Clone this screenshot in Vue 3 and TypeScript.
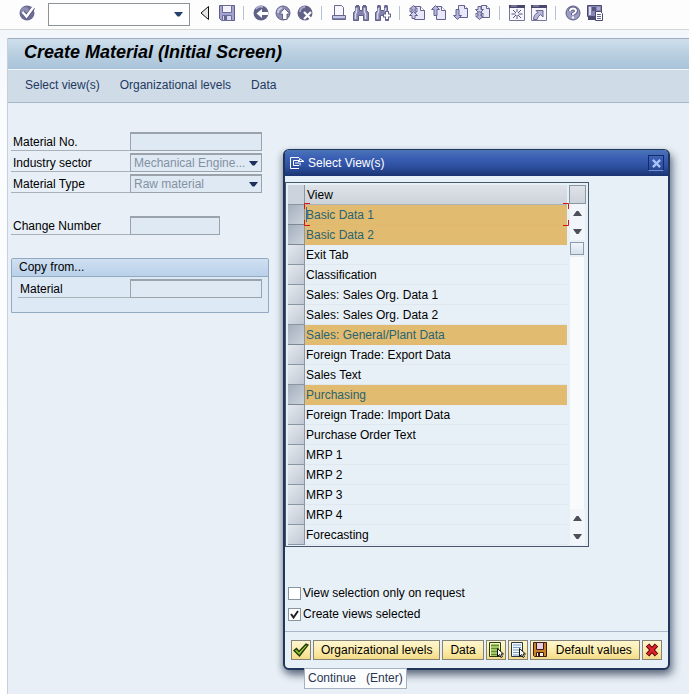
<script setup lang="ts">
import { ref } from 'vue'

interface ViewRow {
  name: string
  selected: boolean
}

const command = ref('')
const materialNo = ref('')
const sector = ref('Mechanical Engine...')
const materialType = ref('Raw material')
const changeNumber = ref('')
const copyMaterial = ref('')
const onlyOnRequest = ref(false)
const createSelected = ref(true)

const menu: string[] = ['Select view(s)', 'Organizational levels', 'Data']

const picked = ['Basic Data 1', 'Basic Data 2', 'Sales: General/Plant Data', 'Purchasing']

const views = ref<ViewRow[]>(
  [
    'Basic Data 1',
    'Basic Data 2',
    'Exit Tab',
    'Classification',
    'Sales: Sales Org. Data 1',
    'Sales: Sales Org. Data 2',
    'Sales: General/Plant Data',
    'Foreign Trade: Export Data',
    'Sales Text',
    'Purchasing',
    'Foreign Trade: Import Data',
    'Purchase Order Text',
    'MRP 1',
    'MRP 2',
    'MRP 3',
    'MRP 4',
    'Forecasting',
  ].map((name) => ({ name, selected: picked.includes(name) })),
)

function toggle(row: ViewRow): void {
  row.selected = !row.selected
}
</script>

<template>
  <div class="page">
    <header class="toolbar">
      <button class="tool" aria-label="Enter">
        <svg viewBox="0 0 16 16">
          <circle cx="8" cy="8" r="7.5" fill="#6b6b93" />
          <circle cx="6" cy="6" r="4" fill="#8d8db3" />
          <path d="M4 7l3.5 4.500L14.500 2.500" fill="none" stroke="#5a5a86" stroke-width="4" />
          <path d="M3.500 7l4 4.500L14.500 2" fill="none" stroke="#fff" stroke-width="2.400" />
        </svg>
      </button>
      <div class="command">
        <input v-model="command" aria-label="Command field" />
        <button class="drop" aria-label="Command history">
          <svg viewBox="0 0 9 5"><path d="M0 0h9L5.500 4.500h-2z" fill="#24406e" /></svg>
        </button>
      </div>
      <button class="tool narrow" aria-label="Hide command field">
        <svg viewBox="0 0 11 16"><path d="M9.500 1.500v13L2 8z" fill="#e6e6e6" stroke="#111" /></svg>
      </button>
      <button class="tool" aria-label="Save">
        <svg viewBox="0 0 16 16">
          <path d="M.5.5h15v15h-13l-2-2z" fill="#a3a3d0" stroke="#5f5f8d" />
          <path d="M3.500.5h9v7h-9z" fill="#f3f2fb" stroke="#6c6c98" />
          <path d="M3.500 15.500v-5h9v5z" fill="#d9d8f0" stroke="#6c6c98" />
          <path d="M5 11h3v4H5z" fill="#66668f" />
        </svg>
      </button>
      <span class="sep"></span>
      <button class="tool" aria-label="Back">
        <svg viewBox="0 0 16 16">
          <circle cx="8" cy="8" r="7.500" fill="#626288" />
          <path d="M3 4a6 6 0 0 1 7-2" fill="none" stroke="#aaaad0" stroke-width="2" />
          <path d="M3.500 8.500L9 4v3h6v3H9v3z" fill="#fff" />
        </svg>
      </button>
      <button class="tool" aria-label="Exit">
        <svg viewBox="0 0 16 16">
          <circle cx="8" cy="8" r="7" fill="#8c8cb4" stroke="#63638a" />
          <path d="M3 8a5 5 0 0 1 4-5" fill="none" stroke="#c9c9e6" stroke-width="2" />
          <path d="M9.500 3.500L15 9h-3v5.500H7.500V9h-3z" fill="#fff" stroke="#63638a" />
        </svg>
      </button>
      <button class="tool" aria-label="Cancel">
        <svg viewBox="0 0 16 16">
          <circle cx="8" cy="8" r="7.500" fill="#626288" />
          <path d="M3 7a5 5 0 0 1 5-5" fill="none" stroke="#aaaad0" stroke-width="2" />
          <path d="M7 7l7 7M14 7l-7 7" stroke="#fff" stroke-width="2.200" />
        </svg>
      </button>
      <span class="sep"></span>
      <button class="tool" aria-label="Print">
        <svg viewBox="0 0 16 16">
          <path d="M3.500 10V.5h7l2 2V10" fill="#f7f7fd" stroke="#66668f" />
          <path d="M1.500 10.500h13v4h-13z" fill="#c6c6e6" stroke="#66668f" />
          <path d="M2 13.500h12" stroke="#8585b0" />
        </svg>
      </button>
      <button class="tool" aria-label="Find">
        <svg viewBox="0 0 16 16">
          <path d="M2.500 1.500h4v4h3v-4h4v4l2 2v8h-5v-5h-5v5h-5v-8l2-2z" fill="#8383ac" stroke="#5f5f8a" />
          <path d="M3 1h3M10 1h3" stroke="#62628e" stroke-width="2" />
          <path d="M3.500 3v4l-1 2v5M11.500 3v4l1 2v5" fill="none" stroke="#d6d6ee" stroke-width="1.600" />
        </svg>
      </button>
      <button class="tool" aria-label="Find next">
        <svg viewBox="0 0 16 16">
          <path d="M2.500 1.500h3v4h4v-4h3v4l1 2v8h-3v-5h-5v5h-5v-8l2-2z" fill="#8383ac" stroke="#5f5f8a" />
          <path d="M2.500 1h3M9.500 1h3" stroke="#62628e" stroke-width="2" />
          <path d="M3.500 3v4l-1 2v5M10.500 3v4" fill="none" stroke="#d6d6ee" stroke-width="1.600" />
          <path d="M12 6v9M8 10.500h8" stroke="#62628e" stroke-width="4" />
          <path d="M12 7v7M9 10.500h6" stroke="#fff" stroke-width="2" />
        </svg>
      </button>
      <span class="sep"></span>
      <button class="tool" aria-label="First page">
        <svg viewBox="0 0 16 16">
          <path d="M5.500 1.500h6l4 4v9h-10z" fill="#e9e8fa" stroke="#62628e" />
          <path d="M11.500 1.500v4h4" fill="#fff" stroke="#62628e" />
          <path d="M4.500.5L8.500 4H6v2h2.500l-4 3.500L.5 6H3V4H.5z" fill="#b5b4da" stroke="#62628e" />
          <path d="M4.500 6.500l4 4H6v3H3v-3H.5z" fill="#d3d2ee" stroke="#62628e" />
        </svg>
      </button>
      <button class="tool" aria-label="Previous page">
        <svg viewBox="0 0 16 16">
          <path d="M5.500 1.500h5l4 4v9h-9z" fill="#e9e8fa" stroke="#62628e" />
          <path d="M10.500 1.500v4h4" fill="#fff" stroke="#62628e" />
          <path d="M4.500.5l4 4H6v6H3v-6H.5z" fill="#b5b4da" stroke="#62628e" />
        </svg>
      </button>
      <button class="tool" aria-label="Next page">
        <svg viewBox="0 0 16 16">
          <path d="M5.500.5h6l3 3v9h-9z" fill="#e9e8fa" stroke="#62628e" />
          <path d="M11.500.5v3h3" fill="#fff" stroke="#62628e" />
          <path d="M4.500 14.500l-4-4H3v-6h3v6h2.500z" fill="#b5b4da" stroke="#62628e" />
        </svg>
      </button>
      <button class="tool" aria-label="Last page">
        <svg viewBox="0 0 16 16">
          <path d="M6.500.5h5l3 3v9h-8z" fill="#e9e8fa" stroke="#62628e" />
          <path d="M11.500.5v3h3" fill="#fff" stroke="#62628e" />
          <path d="M4.500 8.500l-4-4H3v-3h3v3h2.500z" fill="#d3d2ee" stroke="#62628e" />
          <path d="M4.500 14.500l-4-3.500H3V9H.5l4-2.500 4 2.500H6v2h2.500z" fill="#b5b4da" stroke="#62628e" />
        </svg>
      </button>
      <span class="sep"></span>
      <button class="tool" aria-label="New session">
        <svg viewBox="0 0 16 16">
          <path d="M.5.5h15v15H.5z" fill="#f5f5fb" stroke="#77779b" />
          <path d="M0 0h16v3H0z" fill="#48486c" />
          <path d="M2 1h6" stroke="#9c9cc8" />
          <path d="M8 4v3M8 10v4M2.500 9h4M9.500 9h4M4 5l3 3M12 5L9 8M4 13l3-3M12 13l-3-3" stroke="#55557e" />
        </svg>
      </button>
      <button class="tool" aria-label="Create shortcut">
        <svg viewBox="0 0 16 16">
          <path d="M.5.5h15v15H.5z" fill="#f5f5fb" stroke="#77779b" />
          <path d="M0 0h16v3H0z" fill="#48486c" />
          <path d="M2 1h6" stroke="#9c9cc8" />
          <path d="M5 5.500h7v6.500L9.500 9.500q-3 2-3.500 5H2.500q0-5 4.500-7z" fill="#b9b8dc" stroke="#66668f" />
        </svg>
      </button>
      <span class="sep"></span>
      <button class="tool" aria-label="Help">
        <svg viewBox="0 0 16 16">
          <circle cx="8" cy="8" r="7" fill="#9d9dc4" stroke="#5f5f88" />
          <path d="M5 6q0-2.500 3-2.500t3 2.500q0 1.500-3 3v1" fill="none" stroke="#4f4f7a" stroke-width="3.600" />
          <path d="M5 6q0-2.500 3-2.500t3 2.500q0 1.500-3 3v1" fill="none" stroke="#fff" stroke-width="2" />
          <path d="M7 11.500h2v2H7z" fill="#fff" />
        </svg>
      </button>
      <button class="tool" aria-label="Customize layout">
        <svg viewBox="0 0 16 16">
          <path d="M.5.5h14v11H.5z" fill="#8685b6" stroke="#4a4a70" />
          <path d="M2 2h2v8H2z" fill="#dcdcf0" />
          <path d="M5 2h4v4H5z" fill="#55557e" />
          <path d="M10 2h3v3h-3z" fill="#a8a8d0" />
          <path d="M1 13.500h7" stroke="#4a4a70" stroke-width="3" />
          <path d="M8.500 6.500h5l2 2v7h-7z" fill="#fff" stroke="#4a4a70" />
          <path d="M10 9.500h4M10 11.500h4M10 13.500h4" stroke="#66668f" />
        </svg>
      </button>
    </header>

    <main class="screen">
      <h1>Create Material (Initial Screen)</h1>
      <nav class="menu">
        <a v-for="item in menu" :key="item" href="#">{{ item }}</a>
      </nav>

      <form class="form" @submit.prevent>
        <div class="field">
          <label for="matno">Material No.</label>
          <input id="matno" v-model="materialNo" />
        </div>
        <div class="field">
          <label for="sector">Industry sector</label>
          <div class="combo">
            <select id="sector" v-model="sector" disabled>
              <option>Mechanical Engine...</option>
            </select>
            <svg viewBox="0 0 9 5"><path d="M0 0h9L5.500 4.500h-2z" fill="#1d2f5a" /></svg>
          </div>
        </div>
        <div class="field">
          <label for="mattype">Material Type</label>
          <div class="combo">
            <select id="mattype" v-model="materialType" disabled>
              <option>Raw material</option>
            </select>
            <svg viewBox="0 0 9 5"><path d="M0 0h9L5.500 4.500h-2z" fill="#1d2f5a" /></svg>
          </div>
        </div>
        <div class="field apart">
          <label for="change">Change Number</label>
          <input id="change" v-model="changeNumber" class="short" />
        </div>
        <section class="group">
          <h2>Copy from...</h2>
          <div class="field">
            <label for="copymat">Material</label>
            <input id="copymat" v-model="copyMaterial" />
          </div>
        </section>
      </form>
    </main>

    <section class="dialog" role="dialog" aria-labelledby="dlg-title">
      <header class="titlebar">
        <svg class="exit" viewBox="0 0 16 12">
          <path d="M10 .5H1.500v11H10M4.500 3.500h6v-2l4.500 3h-6M4.500 3.500v5H9M6 6h4M10 8.500h-1M11 5.500v3" fill="none" stroke="#fff" />
        </svg>
        <h2 id="dlg-title">Select View(s)</h2>
        <button class="close" aria-label="Close">
          <svg viewBox="0 0 10 10"><path d="M1 1l8 8M9 1L1 9" stroke="#a9c4fb" stroke-width="2.600" /></svg>
        </button>
      </header>

      <div class="grid">
        <table>
          <thead>
            <tr>
              <th class="mark"></th>
              <th>View</th>
            </tr>
          </thead>
          <tbody>
            <tr v-for="row in views" :key="row.name" :class="{ on: row.selected }">
              <td class="mark"><button :aria-label="row.name" @click="toggle(row)"></button></td>
              <td>{{ row.name }}</td>
            </tr>
          </tbody>
        </table>
        <div class="scroll">
          <button class="config" aria-label="Configure columns"></button>
          <button class="arrow" aria-label="Scroll up"><svg viewBox="0 0 9 5"><path d="M0 5h9L5.500 0h-2z" /></svg></button>
          <button class="arrow" aria-label="Scroll down"><svg viewBox="0 0 9 5"><path d="M0 0h9L5.500 5h-2z" /></svg></button>
          <span class="thumb"></span>
          <span class="track"></span>
          <button class="arrow" aria-label="Page up"><svg viewBox="0 0 9 5"><path d="M0 5h9L5.500 0h-2z" /></svg></button>
          <button class="arrow" aria-label="Page down"><svg viewBox="0 0 9 5"><path d="M0 0h9L5.500 5h-2z" /></svg></button>
        </div>
        <svg class="cursor" viewBox="0 0 265 23">
          <path d="M6 .5H.5V6M.5 17v5.500H6M259 .5h5.500V6M264.500 17v5.500H259" fill="none" stroke="#d21414" />
          <path d="M2.500 4v15" stroke="#2f6fa8" />
        </svg>
      </div>

      <div class="options">
        <label>
          <input v-model="onlyOnRequest" type="checkbox" />
          <span>View selection only on request</span>
        </label>
        <label>
          <input v-model="createSelected" type="checkbox" />
          <span>Create views selected</span>
          <svg v-if="createSelected" class="check" viewBox="0 0 9 9">
            <path d="M1 4l2.500 3.500L8 1" fill="none" stroke="#222" stroke-width="2" />
          </svg>
        </label>
      </div>

      <footer class="actions">
        <button class="icon" aria-label="Continue">
          <svg viewBox="0 0 16 16">
            <path d="M1 8.500l2.500-2 2.500 3L13 2l2 1L6.500 14z" fill="#6da324" stroke="#1d3a08" stroke-width="1.300" />
            <path d="M3 8.500l3 3L13 4" fill="none" stroke="#a9d24c" />
          </svg>
        </button>
        <button>Organizational levels</button>
        <button>Data</button>
        <button class="icon" aria-label="Select all">
          <svg viewBox="0 0 16 16">
            <path d="M1.500.5h11v14h-11z" fill="#eef6c4" stroke="#2c3a12" />
            <path d="M3 3.500h8M3 6.500h8M3 9.500h8M3 12.500h8" stroke="#5f8f1c" stroke-width="2" />
            <path d="M9.500 6.500v8l2-2 1.500 3 1.500-1-1.500-2.500h2.500z" fill="#fff" stroke="#111" />
          </svg>
        </button>
        <button class="icon" aria-label="Deselect all">
          <svg viewBox="0 0 16 16">
            <path d="M1.500.5h11v14h-11z" fill="#f2f7fb" stroke="#2b3642" />
            <path d="M3 3h8M3 5.500h8M3 8h8M3 10.500h8M3 13h8" stroke="#7ba0bf" />
            <path d="M9.500 6.500v8l2-2 1.500 3 1.500-1-1.500-2.500h2.500z" fill="#fff" stroke="#111" />
          </svg>
        </button>
        <button class="defaults">
          <svg viewBox="0 0 16 16">
            <path d="M1.500.5h13v14h-12l-1-1z" fill="#c9822a" stroke="#3b1c14" />
            <path d="M4.500.5h7v7h-7z" fill="#e9cde2" stroke="#3b1c14" />
            <path d="M4.500 14.500v-4h7v4z" fill="#fbf3ea" stroke="#3b1c14" />
            <path d="M6 11h2v3H6z" fill="#3b1c14" />
          </svg>
          <span>Default values</span>
        </button>
        <button class="icon" aria-label="Cancel dialog">
          <svg viewBox="0 0 16 16">
            <path d="M3.500 3l9 10M12.500 3l-9 10" stroke="#4a0808" stroke-width="4.600" />
            <path d="M3.800 3.400l8.400 9.200M12.200 3.400l-8.400 9.200" stroke="#e0202a" stroke-width="2.800" />
          </svg>
        </button>
      </footer>
      <div class="tip" role="tooltip">Continue&nbsp;&nbsp; (Enter)</div>
    </section>
  </div>
</template>

<style>
body {
  margin: 0;
}
</style>

<style scoped>
.page,
.page * {
  box-sizing: border-box;
}

.page {
  position: relative;
  display: flex;
  flex-direction: column;
  min-height: 100vh;
  overflow: hidden;
  background: linear-gradient(#f0f5fb, #fbfcfe 120px, #fff);
  color: #000;
  font: 12px/16px 'Liberation Sans', Arial, sans-serif;
}

button,
input,
select {
  margin: 0;
  padding: 0;
  border: 0;
  border-radius: 0;
  background: none;
  color: inherit;
  font: inherit;
}

svg {
  display: block;
}

.toolbar {
  display: flex;
  align-items: center;
  gap: 6px;
  height: 30px;
  padding: 0 0 4px 19px;
  border-bottom: 1px solid #d3d8d2;
  background: #fdfdfe;
}

.tool {
  flex: none;
  width: 16px;
  height: 16px;
}

.narrow {
  width: 11px;
  margin-right: 3px;
}

.tool svg {
  width: 100%;
  height: 16px;
}

.sep {
  flex: none;
  width: 2px;
  height: 14px;
  margin: 0 2px;
  border-left: 1px solid #b4c3d6;
}

.command {
  display: flex;
  align-items: center;
  flex: none;
  width: 142px;
  height: 23px;
  margin: 3px 3px 0 7px;
  border: 1px solid #8d9297;
  background: #fff;
}

.command input {
  flex: 1;
  min-width: 0;
  height: 20px;
  padding: 0 4px;
}

.drop {
  width: 20px;
  height: 20px;
  padding-left: 5px;
}

.drop svg {
  width: 9px;
  height: 5px;
}

.screen {
  flex: 1;
  margin: 8px 0 0 7px;
  border-left: 1px solid #c4d0dc;
  background: #e8eff6;
}

h1 {
  margin: 0;
  padding: 0 16px 4px;
  border-top: 1px solid #a0abc0;
  background: linear-gradient(#cfdfec, #b9cfe0 50%, #a9c3da);
  font: italic bold 18px/26px 'Liberation Sans', Arial, sans-serif;
}

.menu {
  display: flex;
  gap: 20px;
  padding: 7px 17px 9px;
  border-top: 1px solid #eef4fa;
  border-bottom: 1px solid #a5b7c8;
  background: #cfdce7;
}

.menu a {
  color: #243862;
  text-decoration: none;
}

.form {
  display: flex;
  flex-direction: column;
  gap: 2px;
  width: 261px;
  padding: 29px 0 0 3px;
}

.field {
  display: flex;
  align-items: flex-end;
}

.field label {
  width: 119px;
  height: 17px;
  padding-left: 2px;
  border-bottom: 1px solid #a9b1b9;
}

.field input,
.combo {
  width: 132px;
  height: 19px;
  border: 1px solid #9aa3ac;
  border-top-width: 2px;
  background: #dfe9f3;
}

.field .short {
  width: 90px;
}

.combo {
  position: relative;
}

.combo select {
  display: block;
  width: 100%;
  height: 15px;
  padding-left: 3px;
  appearance: none;
  color: #8391a2;
  opacity: 1;
}

.combo svg {
  position: absolute;
  top: 6px;
  right: 3px;
  width: 9px;
  height: 5px;
}

.apart {
  margin-top: 21px;
}

.group {
  width: 258px;
  margin-top: 21px;
  padding-bottom: 14px;
  border: 1px solid #92a9c0;
  border-radius: 2px 2px 0 0;
  background: #dde9f5;
}

.group h2 {
  margin: 0 0 2px;
  padding: 0 7px 1px;
  border-bottom: 1px solid #92a9c0;
  background: linear-gradient(#cfe0f1, #b9d1ea);
  font: 12px/16px 'Liberation Sans', Arial, sans-serif;
}

.group .field {
  padding-left: 6px;
}

.group .field label {
  width: 112px;
}

.dialog {
  position: absolute;
  top: 149px;
  left: 283px;
  width: 387px;
  border: 1px solid #20365a;
  border-width: 1px 2px 2px;
  border-radius: 6px;
  background: #e8f0f7;
  box-shadow: 3px 5px 8px rgba(40, 55, 80, 0.6), -2px 3px 6px rgba(40, 55, 80, 0.3);
}

.titlebar {
  display: flex;
  align-items: center;
  height: 26px;
  padding: 0 4px;
  border-radius: 4px 4px 0 0;
  background: linear-gradient(#4b74b8, #3a5fb4 30%, #2d4f9f 65%, #1a3472);
  color: #fff;
}

.exit {
  width: 16px;
  height: 12px;
}

.titlebar h2 {
  flex: 1;
  margin: 0 0 0 3px;
  font: 12px/16px 'Liberation Sans', Arial, sans-serif;
}

.close {
  display: flex;
  align-items: center;
  justify-content: center;
  width: 16px;
  height: 16px;
  border: 1px solid #142c66;
  border-bottom-color: #6f8fd0;
}

.close svg {
  width: 9px;
  height: 9px;
}

.grid {
  position: relative;
  display: flex;
  width: 304px;
  margin-top: 6px;
  padding: 2px 2px 1px;
  border: 1px solid #46566b;
}

table {
  flex: 1;
  border-spacing: 0;
}

th {
  height: 20px;
  padding: 0 0 0 2px;
  border-bottom: 1px solid #a9b1ba;
  background: linear-gradient(#dfe3e8, #cdd3da);
  font-weight: normal;
  text-align: left;
}

td {
  height: 20px;
  padding: 0 0 0 1px;
  border-bottom: 1px solid #e0e7ee;
  line-height: 16px;
}

.mark {
  width: 17px;
  padding: 0;
  border-right: 1px solid #8b96a3;
  border-bottom: 1px solid #8b96a3;
  background: #ccd3dc;
}

.mark button {
  display: block;
  width: 16px;
  height: 19px;
  background: linear-gradient(135deg, #e4e9ee, #bfc8d3);
}

.on td {
  border-bottom-color: #e1b86c;
  background: #e1bb6f;
  color: #2a6371;
}

.on .mark {
  border-bottom-color: #7d8895;
}

.on .mark button {
  background: linear-gradient(135deg, #a4afbd, #ccd3dc);
}

.scroll {
  display: flex;
  flex-direction: column;
  align-items: center;
  width: 19px;
  padding-left: 1px;
}

.config {
  width: 17px;
  height: 19px;
  border: 1px solid #8b96a3;
  background: linear-gradient(#dfe3e8, #cdd3da);
}

.arrow {
  display: flex;
  align-items: center;
  justify-content: center;
  width: 15px;
  height: 18px;
  background: #f2f6fa;
}

.arrow svg {
  width: 9px;
  height: 5px;
  fill: #4b5158;
}

.thumb {
  width: 14px;
  height: 13px;
  margin: 2px 0;
  border: 1px solid #8b9bac;
  background: linear-gradient(#f0f5fa, #d5e0ea);
}

.track {
  flex: 1;
  width: 14px;
  background: #f8fafc;
}

.cursor {
  position: absolute;
  top: 20px;
  left: 18px;
  width: 265px;
  height: 23px;
  pointer-events: none;
}

.options {
  display: flex;
  flex-direction: column;
  gap: 5px;
  padding: 38px 3px 9px;
}

.options label {
  position: relative;
  display: flex;
  align-items: center;
  gap: 2px;
}

.options input {
  width: 13px;
  height: 13px;
  appearance: none;
  border: 1px solid #8a949e;
  background: #fff;
}

.check {
  position: absolute;
  top: 4px;
  left: 2px;
  width: 9px;
  height: 9px;
}

.actions {
  display: flex;
  gap: 2px;
  padding: 8px 0 8px 6px;
  border-top: 1px solid #a9b7c8;
}

.actions button {
  display: flex;
  flex: none;
  align-items: center;
  justify-content: center;
  height: 20px;
  padding: 0 7px;
  border: 1px solid #85827a;
  background: linear-gradient(#fff6cf, #fbeaa6 60%, #f3da86);
  white-space: nowrap;
}

.actions .icon {
  width: 20px;
  padding: 0;
}

.actions svg {
  width: 16px;
  height: 16px;
}

.actions .defaults {
  gap: 8px;
  padding: 0 7px 0 1px;
}

.tip {
  position: absolute;
  top: 518px;
  left: 19px;
  padding: 1px 3px 2px;
  border: 1px solid #a3b1c2;
  background: #fbfcfe;
  color: #2b3550;
  white-space: nowrap;
}
</style>
